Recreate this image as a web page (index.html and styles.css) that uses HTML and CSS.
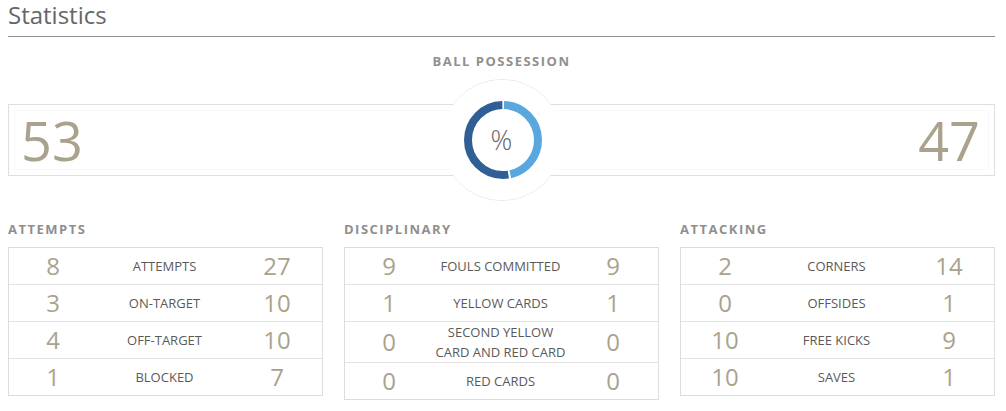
FILE: index.html
```html
<!DOCTYPE html>
<html>
<head>
<meta charset="utf-8">
<link rel="stylesheet" href="styles.css">
</head>
<body>
<div class="page">
  <h2 class="title">Statistics</h2>

  <section class="possession">
    <h3 class="section-head center">BALL POSSESSION</h3>
    <div class="poss-wrap">
      <div class="ring-bg"></div>
      <div class="poss-box">
        <div class="poss-inner">
          <span class="big">53</span>
          <span class="big">47</span>
        </div>
      </div>
      <div class="ring">
        <svg class="donut" width="78" height="78" viewBox="0 0 78 78">
          <circle cx="39" cy="39" r="35" fill="none" stroke="#5aa7e0" stroke-width="8" stroke-dasharray="101.4 400" stroke-dashoffset="-1" transform="rotate(-90 39 39)"/>
          <circle cx="39" cy="39" r="35" fill="none" stroke="#2f5f95" stroke-width="8" stroke-dasharray="114.5 400" stroke-dashoffset="-104.4" transform="rotate(-90 39 39)"/>
        </svg>
        <span class="pct">%</span>
      </div>
    </div>
  </section>

  <div class="groups">
    <section class="group">
      <h3 class="section-head">ATTEMPTS</h3>
      <div class="table">
        <div class="row"><span class="num">8</span><span class="label">ATTEMPTS</span><span class="num">27</span></div>
        <div class="row"><span class="num">3</span><span class="label">ON-TARGET</span><span class="num">10</span></div>
        <div class="row"><span class="num">4</span><span class="label">OFF-TARGET</span><span class="num">10</span></div>
        <div class="row"><span class="num">1</span><span class="label">BLOCKED</span><span class="num">7</span></div>
      </div>
    </section>
    <section class="group">
      <h3 class="section-head">DISCIPLINARY</h3>
      <div class="table">
        <div class="row"><span class="num">9</span><span class="label">FOULS COMMITTED</span><span class="num">9</span></div>
        <div class="row"><span class="num">1</span><span class="label">YELLOW CARDS</span><span class="num">1</span></div>
        <div class="row tall"><span class="num">0</span><span class="label">SECOND YELLOW<br>CARD AND RED CARD</span><span class="num">0</span></div>
        <div class="row"><span class="num">0</span><span class="label">RED CARDS</span><span class="num">0</span></div>
      </div>
    </section>
    <section class="group">
      <h3 class="section-head">ATTACKING</h3>
      <div class="table">
        <div class="row"><span class="num">2</span><span class="label">CORNERS</span><span class="num">14</span></div>
        <div class="row"><span class="num">0</span><span class="label">OFFSIDES</span><span class="num">1</span></div>
        <div class="row"><span class="num">10</span><span class="label">FREE KICKS</span><span class="num">9</span></div>
        <div class="row"><span class="num">10</span><span class="label">SAVES</span><span class="num">1</span></div>
      </div>
    </section>
  </div>
</div>
</body>
</html>
```

FILE: styles.css
```css
* { box-sizing: border-box; }

html, body {
  margin: 0;
  padding: 0;
  background: #ffffff;
}

body {
  font-family: "Open Sans", "Liberation Sans", sans-serif;
  color: #555;
}

.page {
  width: 987px;
  margin-left: 8px;
  padding-top: 1px;
}

.title {
  margin: -1px 0 0;
  font-size: 24px;
  font-weight: 400;
  line-height: 29px;
  color: #666;
  padding-bottom: 7px;
  border-bottom: 1px solid #909090;
}

.section-head {
  margin: 0;
  font-size: 13px;
  font-weight: 700;
  line-height: 18px;
  letter-spacing: 1.5px;
  color: #8f8f8f;
}

.section-head.center {
  text-align: center;
  margin-top: 15px;
}

.poss-wrap {
  position: relative;
  margin-top: 9px;
  padding: 25px 0;
}

.ring-bg {
  position: absolute;
  left: 50%;
  top: 0;
  width: 122px;
  height: 122px;
  margin-left: -61px;
  border-radius: 50%;
  border: 1px solid #e9e9e9;
  background: #fff;
}

.poss-box {
  position: relative;
  height: 72px;
  border: 1px solid #dedede;
  padding: 5px;
  background: #fff;
}

.poss-inner {
  height: 100%;
  border: 1px solid #f8f8f8;
  display: flex;
  align-items: center;
  justify-content: space-between;
  padding: 0 8px 0 6px;
}

.big {
  font-size: 54px;
  line-height: 1;
  color: #aba28e;
}

.ring {
  position: absolute;
  left: 50%;
  top: 1px;
  width: 120px;
  height: 120px;
  margin-left: -60px;
  border-radius: 50%;
  background: #fff;
  display: flex;
  align-items: center;
  justify-content: center;
}

.donut {
  position: absolute;
  left: 22px;
  top: 21px;
}

.pct {
  position: relative;
  font-size: 27px;
  font-weight: 300;
  color: #666;
  line-height: 1;
  margin-top: -2px;
}

.groups {
  display: grid;
  grid-template-columns: repeat(3, 315px);
  column-gap: 21px;
  margin-top: 19px;
}

.group .section-head {
  margin-bottom: 9px;
}

.table {
  border: 1px solid #dddddd;
}

.row {
  display: grid;
  grid-template-columns: 88px 1fr 90px;
  align-items: center;
  height: 37px;
  border-bottom: 1px solid #e2e2e2;
}

.row:last-child {
  height: 36px;
  border-bottom: none;
}

.row.tall {
  height: 41px;
}

.num {
  text-align: center;
  font-size: 24px;
  line-height: 1;
  color: #aba28e;
}

.label {
  text-align: center;
  font-size: 13px;
  line-height: 20px;
  color: #5a5a5a;
}
```
